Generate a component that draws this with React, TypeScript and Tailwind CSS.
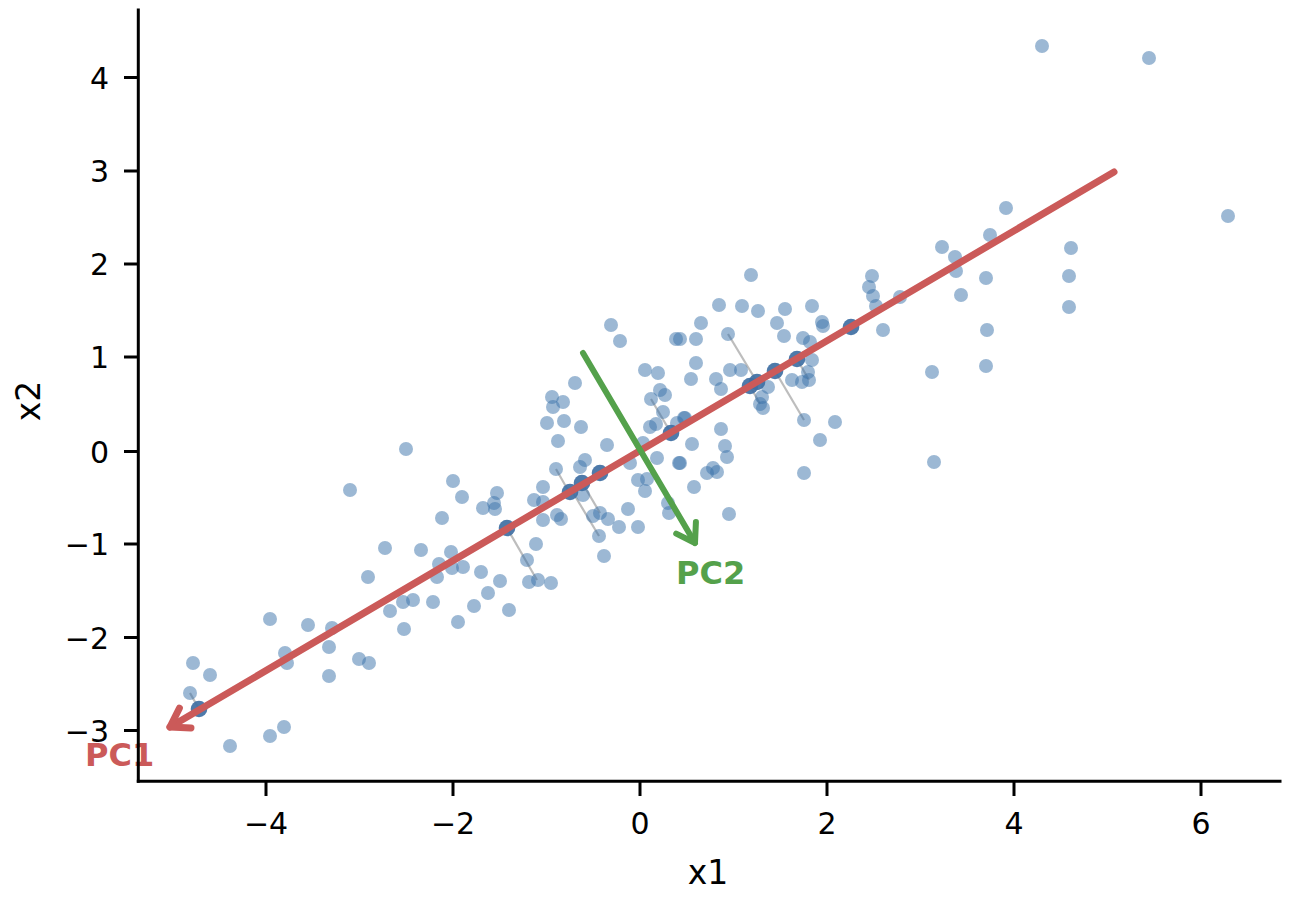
type Pt = [number, number];

// plot area in pixels: x = 640 + 93.6 * v, y = 451.5 - 93.3 * v
const xTicks = [
  { v: '−4', x: 266 },
  { v: '−2', x: 453 },
  { v: '0', x: 640 },
  { v: '2', x: 827 },
  { v: '4', x: 1014 },
  { v: '6', x: 1201 },
];

const yTicks = [
  { v: '4', y: 77.5 },
  { v: '3', y: 171 },
  { v: '2', y: 264 },
  { v: '1', y: 357 },
  { v: '0', y: 451.5 },
  { v: '−1', y: 544 },
  { v: '−2', y: 637.5 },
  { v: '−3', y: 730.5 },
];

const samples: Pt[] = [
  [1042, 46], [1149, 58], [1228, 216], [1006, 208], [990, 235], [1071, 248], [942, 247], [955, 257],
  [956, 271], [986, 278], [1069, 276], [872, 276], [869, 287], [873, 296], [876, 306], [900, 297],
  [961, 295], [1069, 307], [883, 330], [987, 330], [932, 372], [986, 366], [934, 462],
  [751, 275], [719, 305], [742, 306], [758, 311], [785, 309], [812, 306], [701, 323], [777, 323],
  [822, 322], [823, 326], [728, 334], [696, 339], [680, 339], [784, 336], [803, 338], [810, 342],
  [696, 363], [812, 360], [730, 370], [741, 370], [691, 379], [716, 379], [721, 389], [792, 380],
  [802, 382], [809, 380], [808, 372], [768, 387], [762, 397], [760, 404], [763, 408], [804, 420],
  [835, 422], [820, 440], [685, 418], [721, 429], [692, 444], [725, 446], [727, 457], [680, 463],
  [713, 468], [717, 472], [707, 473], [804, 473],
  [611, 325], [620, 341], [676, 339], [645, 370], [658, 373], [575, 383], [552, 397], [553, 407],
  [563, 402], [547, 423], [564, 421], [581, 427], [558, 441], [651, 399], [660, 390], [665, 395],
  [663, 412], [650, 427], [656, 424], [684, 418], [677, 423], [607, 445], [679, 463], [657, 458],
  [643, 443], [630, 463], [585, 460], [580, 467], [556, 469], [583, 495], [543, 487], [534, 500],
  [543, 502], [638, 480], [647, 479], [645, 491], [694, 487], [668, 503], [669, 513], [729, 514],
  [628, 509], [557, 515], [561, 519], [543, 520], [593, 516], [600, 513], [608, 519], [619, 527],
  [638, 527], [599, 536], [604, 556],
  [406, 449], [350, 490], [453, 481], [462, 497], [497, 493], [494, 503], [483, 508], [495, 509],
  [442, 518], [536, 544], [527, 560], [385, 548], [421, 550], [451, 552], [439, 564], [452, 568],
  [463, 567], [437, 577], [481, 572], [500, 581], [529, 582], [538, 580], [551, 583], [488, 593],
  [368, 577], [413, 600], [403, 602], [433, 602], [474, 606], [509, 610], [390, 611], [458, 622],
  [404, 629], [308, 625], [332, 628], [270, 619],
  [329, 647], [285, 653], [287, 663], [359, 659], [369, 663], [329, 676], [193, 663], [210, 675],
  [190, 693], [284, 727], [270, 736], [230, 746],
];

const projected: Pt[] = [
  [199, 709], [507, 528], [570, 492], [582, 483], [600, 473], [671, 433],
  [750, 386], [757, 382], [775, 371], [797, 359], [851, 327],
];

const residuals: [Pt, Pt][] = [
  [[190, 693], [199, 709]],
  [[537, 580], [507, 528]],
  [[556, 469], [569, 492]],
  [[600, 513], [583, 484]],
  [[599, 536], [572, 491]],
  [[651, 399], [671, 433]],
  [[728, 334], [757, 382]],
  [[760, 404], [750, 386]],
  [[804, 420], [775, 371]],
  [[809, 380], [797, 359]],
];

function arrowHead(from: Pt, tip: Pt, len: number, spread: number) {
  const dx = from[0] - tip[0];
  const dy = from[1] - tip[1];
  const a = Math.atan2(dy, dx);
  const s = (spread * Math.PI) / 180;
  const w1: Pt = [tip[0] + len * Math.cos(a - s), tip[1] + len * Math.sin(a - s)];
  const w2: Pt = [tip[0] + len * Math.cos(a + s), tip[1] + len * Math.sin(a + s)];
  return `${w1[0]},${w1[1]} ${tip[0]},${tip[1]} ${w2[0]},${w2[1]}`;
}

function Arrow({ from, tip, color, width }: { from: Pt; tip: Pt; color: string; width: number }) {
  return (
    <g stroke={color} strokeWidth={width} strokeLinecap="round" strokeLinejoin="round" fill="none">
      <line x1={from[0]} y1={from[1]} x2={tip[0]} y2={tip[1]} />
      <polyline points={arrowHead(from, tip, 21, 33)} />
    </g>
  );
}

export default function App() {
  return (
    <div className="w-[1292px] h-[902px] bg-white font-['DejaVu_Sans','Liberation_Sans',sans-serif]">
      <svg width="1292" height="902" viewBox="0 0 1292 902">
        {/* residual lines */}
        <g stroke="#bdbdbd" strokeWidth={2.2}>
          {residuals.map(([a, b], i) => (
            <line key={i} x1={a[0]} y1={a[1]} x2={b[0]} y2={b[1]} />
          ))}
        </g>

        {/* samples */}
        <g fill="#3a72aa" fillOpacity={0.5}>
          {samples.map(([x, y], i) => (
            <circle key={i} cx={x} cy={y} r={7} />
          ))}
        </g>

        {/* projections onto PC1 */}
        <g fill="#3f6fa3" fillOpacity={0.92}>
          {projected.map(([x, y], i) => (
            <circle key={i} cx={x} cy={y} r={8.3} />
          ))}
        </g>

        <Arrow from={[1114, 172]} tip={[170, 727]} color="#cb5a59" width={7} />
        <Arrow from={[583, 353]} tip={[695, 543]} color="#54a14b" width={6} />

        <text x={85} y={766} fill="#cb5a59" fontSize={32} fontWeight="bold">PC1</text>
        <text x={676} y={584} fill="#54a14b" fontSize={32} fontWeight="bold">PC2</text>

        {/* spines */}
        <g stroke="#000" strokeWidth={3} strokeLinecap="square">
          <line x1={138.3} y1={10} x2={138.3} y2={781.3} />
          <line x1={138.3} y1={781.3} x2={1280} y2={781.3} />
        </g>

        {/* ticks */}
        <g stroke="#000" strokeWidth={3}>
          {xTicks.map((t) => (
            <line key={t.v} x1={t.x} y1={781} x2={t.x} y2={796} />
          ))}
          {yTicks.map((t) => (
            <line key={t.v} x1={124} y1={t.y} x2={138} y2={t.y} />
          ))}
        </g>

        <g fill="#000" fontSize={30}>
          {xTicks.map((t) => (
            <text key={t.v} x={t.x} y={833.5} textAnchor="middle">
              {t.v}
            </text>
          ))}
          {yTicks.map((t) => (
            <text key={t.v} x={109} y={t.y + 11} textAnchor="end">
              {t.v}
            </text>
          ))}
        </g>

        <text x={708} y={884} fontSize={33} textAnchor="middle" fill="#000">
          x1
        </text>
        <text
          x={0}
          y={0}
          fontSize={33}
          textAnchor="middle"
          fill="#000"
          transform="translate(40 401) rotate(-90)"
        >
          x2
        </text>
      </svg>
    </div>
  );
}
